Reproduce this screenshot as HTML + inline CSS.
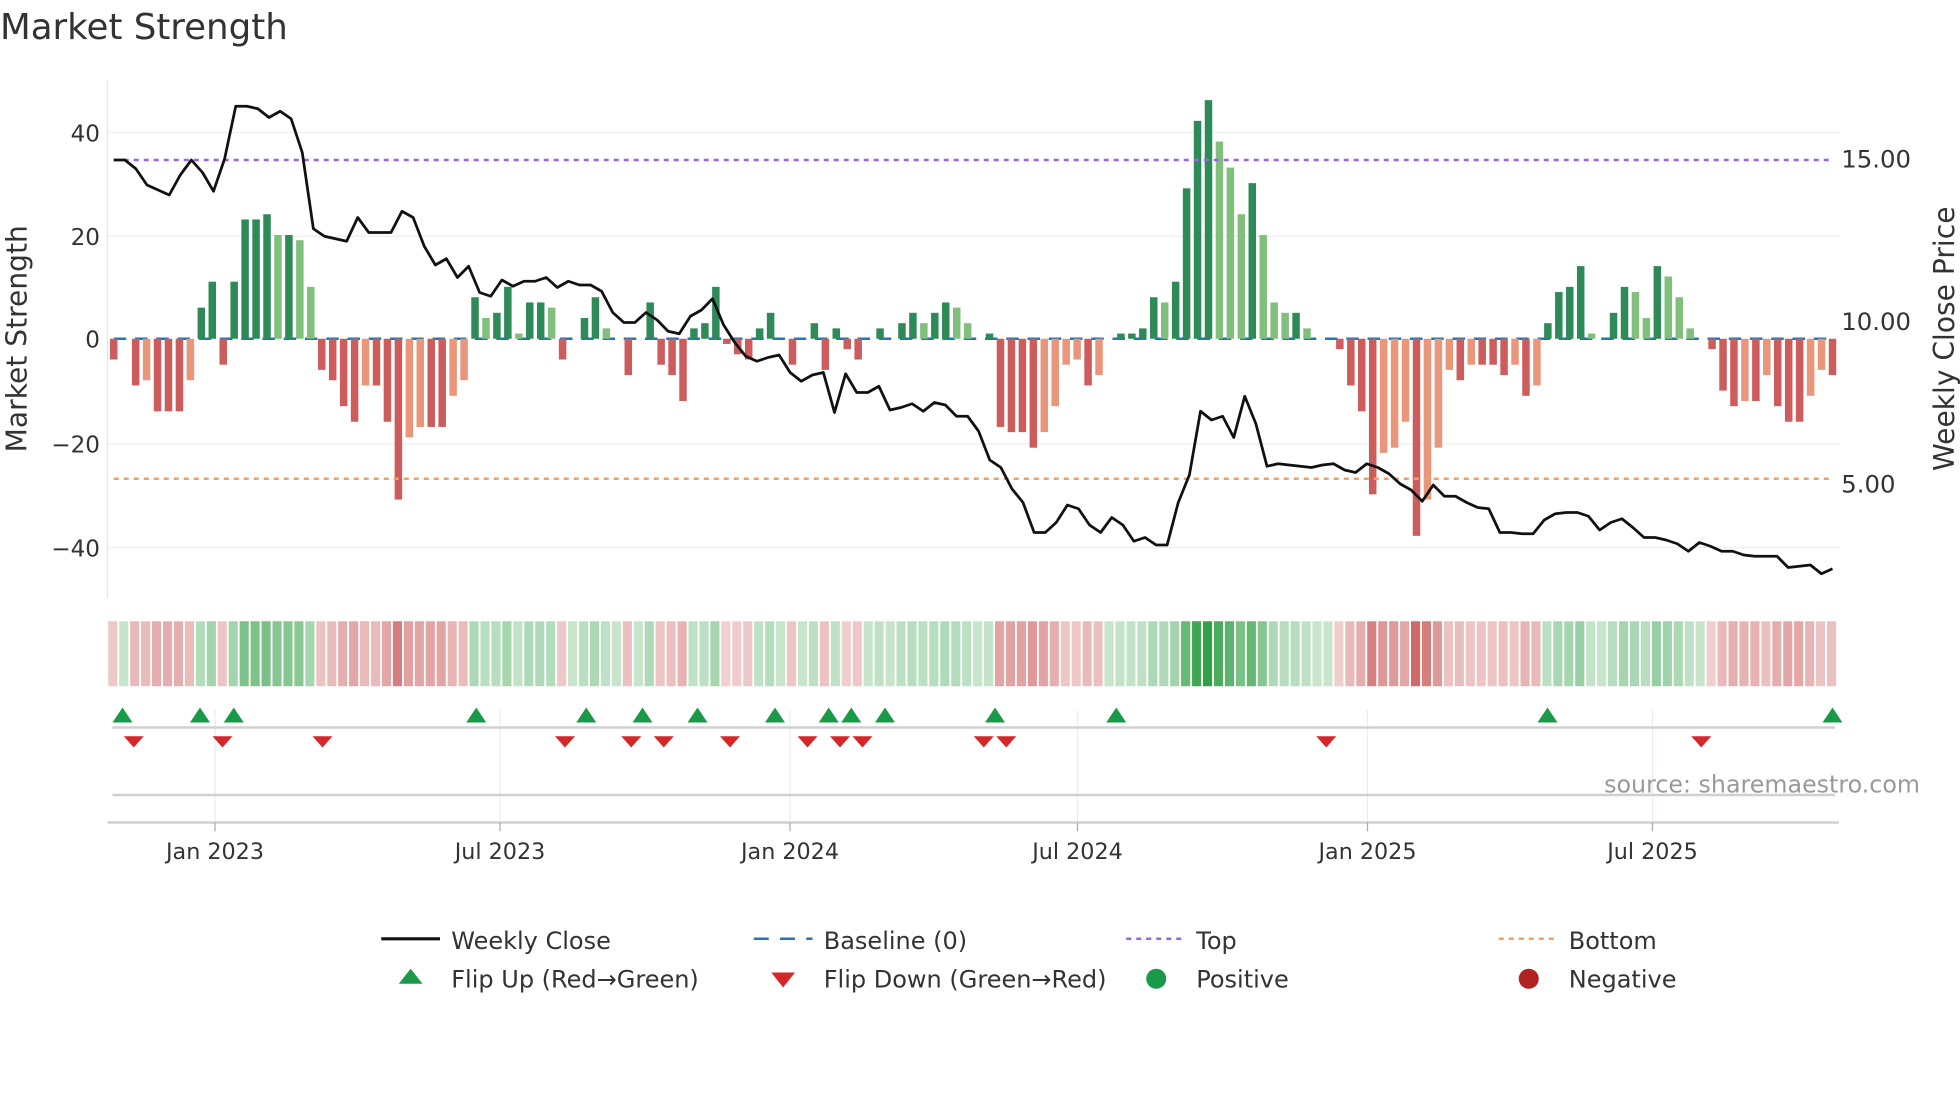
<!DOCTYPE html>
<html><head><meta charset="utf-8"><style>
html,body{margin:0;padding:0;background:#fff;}
svg{display:block;font-family:"DejaVu Sans","Liberation Sans",sans-serif;}
</style></head><body>
<svg id="s" width="1960" height="1102" viewBox="0 0 1568 881.6" xmlns="http://www.w3.org/2000/svg">
<rect width="1568" height="882" fill="#fff"/>
<text x="0" y="31" font-size="28.5" fill="#333">Market Strength</text>
<g stroke="#eeeeee" stroke-width="1">
<line x1="86" x2="1471" y1="106" y2="106"/><line x1="86" x2="1471" y1="189" y2="189"/>
<line x1="86" x2="1471" y1="355" y2="355"/><line x1="86" x2="1471" y1="438" y2="438"/>
</g>
<line x1="86" x2="86" y1="64" y2="478" stroke="#e6e6e6"/>
<g font-size="18.5" fill="#333" text-anchor="end">
<text x="80" y="113">40</text><text x="80" y="196">20</text><text x="80" y="278">0</text>
<text x="80" y="362">−20</text><text x="80" y="445">−40</text>
</g>
<g font-size="19.5" fill="#333">
<text x="1473" y="134">15.00</text><text x="1473" y="264">10.00</text><text x="1473" y="394">5.00</text>
</g>
<text transform="translate(21,271) rotate(-90)" font-size="22.5" fill="#333" text-anchor="middle">Market Strength</text>
<text transform="translate(1563,271) rotate(-90)" font-size="22.5" fill="#333" text-anchor="middle">Weekly Close Price</text>
<line x1="91" x2="1466" y1="271" y2="271" stroke="#1f77b4" stroke-width="2" stroke-dasharray="10,7"/>
<g id="bars"></g>
<line x1="91" x2="1466" y1="128" y2="128" stroke="#9966dd" stroke-width="2" stroke-dasharray="4,4"/>
<line x1="91" x2="1466" y1="383" y2="383" stroke="#f0a060" stroke-width="2" stroke-dasharray="4,4"/>
<polyline id="price" fill="none" stroke="#111" stroke-width="2.2" stroke-linejoin="round"/>
<g id="heat"></g>
<g stroke="#e8eeee" stroke-width="1">
<line x1="172" x2="172" y1="568" y2="658"/><line x1="400" x2="400" y1="568" y2="658"/>
<line x1="632" x2="632" y1="568" y2="658"/><line x1="862" x2="862" y1="568" y2="658"/>
<line x1="1094" x2="1094" y1="568" y2="658"/><line x1="1322" x2="1322" y1="568" y2="658"/>
</g>
<line x1="90" x2="1468" y1="582" y2="582" stroke="#d0d0d0" stroke-width="2"/>
<line x1="90" x2="1468" y1="636" y2="636" stroke="#d0d0d0" stroke-width="2"/>
<line x1="86" x2="1471" y1="658" y2="658" stroke="#d0d0d0" stroke-width="2"/>
<g stroke="#aaa" stroke-width="1">
<line x1="172" x2="172" y1="658" y2="665"/><line x1="400" x2="400" y1="658" y2="665"/>
<line x1="632" x2="632" y1="658" y2="665"/><line x1="862" x2="862" y1="658" y2="665"/>
<line x1="1094" x2="1094" y1="658" y2="665"/><line x1="1322" x2="1322" y1="658" y2="665"/>
</g>
<g id="flips"></g>
<text x="1536" y="634" font-size="19" fill="#999" text-anchor="end">source: sharemaestro.com</text>
<g font-size="17.8" fill="#333" text-anchor="middle">
<text x="172" y="687">Jan 2023</text><text x="400" y="687">Jul 2023</text><text x="632" y="687">Jan 2024</text>
<text x="862" y="687">Jul 2024</text><text x="1094" y="687">Jan 2025</text><text x="1322" y="687">Jul 2025</text>
</g>
<g font-size="19.2" fill="#333">
<line x1="305" x2="352" y1="751" y2="751" stroke="#111" stroke-width="2.5"/><text x="361" y="759">Weekly Close</text>
<line x1="603" x2="650" y1="751" y2="751" stroke="#1f77b4" stroke-width="2" stroke-dasharray="12,9"/><text x="659" y="759">Baseline (0)</text>
<line x1="901" x2="946" y1="751" y2="751" stroke="#9966dd" stroke-width="2" stroke-dasharray="4,4"/><text x="957" y="759">Top</text>
<line x1="1199" x2="1244" y1="751" y2="751" stroke="#f0a060" stroke-width="2" stroke-dasharray="4,4"/><text x="1255" y="759">Bottom</text>
<polygon points="319,787 338,787 328.5,775" fill="#1a9a48"/><text x="361" y="790">Flip Up (Red→Green)</text>
<polygon points="617,778 636,778 626.5,790" fill="#d62728"/><text x="659" y="790">Flip Down (Green→Red)</text>
<circle cx="925" cy="783" r="8" fill="#1a9a48"/><text x="957" y="790">Positive</text>
<circle cx="1223" cy="783" r="8" fill="#b22222"/><text x="1255" y="790">Negative</text>
</g>
</svg>
<script>
var NS="http://www.w3.org/2000/svg";
function el(t,a,p){var e=document.createElementNS(NS,t);for(var k in a)e.setAttribute(k,a[k]);document.getElementById(p).appendChild(e);return e;}
var v=[-4,0,-9,-8,-14,-14,-14,-8,6,11,-5,11,23,23,24,20,20,19,10,-6,-8,-13,-16,-9,-9,-16,-31,-19,-17,-17,-17,-11,-8,8,4,5,10,1,7,7,6,-4,0,4,8,2,0,-7,0,7,-5,-7,-12,2,3,10,-1,-3,-4,2,5,0,-5,0,3,-6,2,-2,-4,0,2,0,3,5,3,5,7,6,3,0,1,-17,-18,-18,-21,-18,-13,-5,-4,-9,-7,0,1,1,2,8,7,11,29,42,46,38,33,24,30,20,7,5,5,2,0,0,-2,-9,-14,-30,-22,-21,-16,-38,-31,-21,-6,-8,-5,-5,-5,-7,-5,-11,-9,3,9,10,14,1,0,5,10,9,4,14,12,8,2,0,-2,-10,-13,-12,-12,-7,-13,-16,-16,-11,-6,-7];
var n=v.length,step=(1466-91)/(n-1);
for(var i=0;i<n;i++){
 var x=91+i*step,val=v[i],prev=i?v[i-1]:0,c;
 if(val>=0)c=(val>=prev)?"#2e8b57":"#81c07c";else c=(val<=prev)?"#cd5c5c":"#e9967a";
 if(val!==0){var h=Math.abs(val)*4.15;el("rect",{x:x-3,y:val>0?271-h:271,width:6,height:h,fill:c},"bars");}
 var hc;
 if(val>=0)hc="rgba(50,160,70,"+(0.28+Math.abs(val)/46*0.72)+")";else hc="rgba(200,80,80,"+(0.25+Math.abs(val)/38*0.6)+")";
 el("rect",{x:x-4.4,y:497,width:7.3,height:52,fill:hc},"heat");
}
var py=[128,128,135,148,152,156,140,128,138,153,127,85,85,87,94,89,95,122,183,189,191,193,174,186,186,186,169,174,197,212,207,222,213,234,237,224,229,225,225,222,230,225,228,228,233,250,258,258,250,256,265,267,253,248,239,260,274,285,289,286,284,298,305,300,298,330,299,314,314,309,328,326,323,329,322,324,333,333,345,368,374,391,402,426,426,418,404,407,420,426,414,420,433,430,436,436,402,380,329,336,333,350,317,339,373,371,372,373,374,372,371,376,378,371,374,379,387,392,401,388,397,397,402,406,407,426,426,427,427,416,411,410,410,413,424,418,415,422,430,430,432,435,441,434,437,441,441,444,445,445,445,454,453,452,459,455];
var ps=(1466-91)/(py.length-1),pts=[];
for(var j=0;j<py.length;j++)pts.push((91+j*ps).toFixed(1)+","+py[j]);
document.getElementById("price").setAttribute("points",pts.join(" "));
[98,160,187,381,469,514,558,620,663,681,708,796,893,1238,1466].forEach(function(x){el("polygon",{points:(x-8)+",578 "+(x+8)+",578 "+x+",566",fill:"#1a9a48"},"flips");});
[107,178,258,452,505,531,584,646,672,690,787,805,1061,1361].forEach(function(x){el("polygon",{points:(x-8)+",589 "+(x+8)+",589 "+x+",598",fill:"#d62728"},"flips");});
</script>
</body></html>
